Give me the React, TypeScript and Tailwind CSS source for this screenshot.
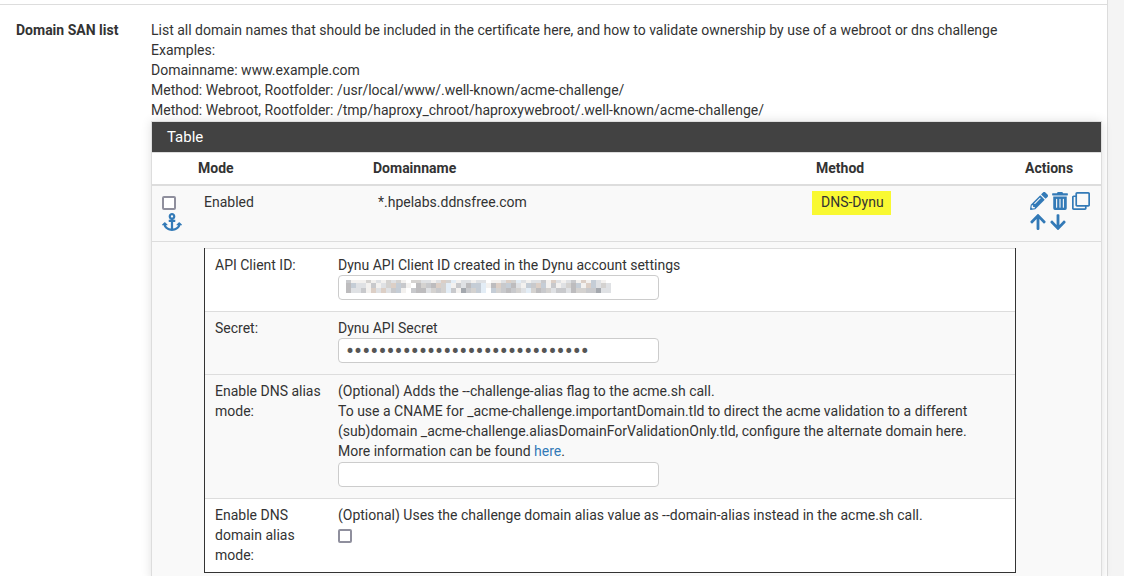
import React from "react";
import { FaAnchor, FaArrowDown, FaArrowUp, FaPencilAlt, FaRegClone, FaTrashAlt } from "react-icons/fa";

const maskColors: Record<string, string> = {
  a: "#a4a8ae",
  b: "#bdbcbe",
  c: "#c8c9cc",
  d: "#d4d2d0",
  e: "#dfe1e4",
  f: "#f3f1ef",
  w: "#ffffff",
  s: "#e3edf6",
  t: "#dccfc6",
  u: "#c5cdd6",
};

const maskRows = [
  { y: 0, height: 3, cells: "cfffdfefdedfwddeefetdsfeefeewffetdsefeecftefecftfuefw" },
  { y: 3, height: 5, cells: "bueefcfedtucfwbdcbtdsfcebuusfbtcubefuctufcfedbuftuede" },
  { y: 8, height: 5, cells: "beecftetecufwcbbedcdscfacduswudcbcdesdbcdeccebddccaee" },
];

const box = "block h-[25px] w-[321px] max-w-full rounded border border-[#cccccc] bg-white px-[7px] text-[#555555] outline-none";
const tick = "block size-[14px] appearance-none rounded-[2px] border-2 border-[#8f8f9d] bg-white checked:bg-[#337ab7]";
const labelCell = "w-[123px] pl-[10px] pr-[5px] pt-[6px] pb-[7px]";
const fieldCell = "px-[10px] pt-[6px] pb-[11px]";

function MaskedValue() {
  return (
    <svg className="pointer-events-none absolute top-[5px] left-2" width="265" height="13" viewBox="0 0 265 13" shapeRendering="crispEdges" aria-hidden="true">
      {maskRows.map((row) =>
        row.cells.split("").map((cell, i) => (
          <rect key={`${row.y}-${i}`} x={i * 5} y={row.y} width="5" height={row.height} fill={maskColors[cell]} />
        ))
      )}
    </svg>
  );
}

export default function App() {
  return (
    <div className="bg-[#f4f4f4] pr-4 font-[Roboto,sans-serif] text-sm leading-5 text-[#333333]">
      <main className="border-r border-[#dcdcdc] bg-white pt-1">
        <section className="flex border-t border-[#dddddd] pt-[15px] pr-[5px]">
          <h2 className="w-[151px] shrink-0 pl-4 font-bold">Domain SAN list</h2>
          <div className="min-w-0 flex-1">
            <p className="pb-px">
              List all domain names that should be included in the certificate here, and how to validate ownership by use of a webroot or dns challenge<br />
              Examples:<br />
              Domainname: www.example.com<br />
              Method: Webroot, Rootfolder: /usr/local/www/.well-known/acme-challenge/<br />
              Method: Webroot, Rootfolder: /tmp/haproxy_chroot/haproxywebroot/.well-known/acme-challenge/
            </p>
            <div className="border border-[#dddddd] bg-white shadow-[0_0_10px_rgba(0,0,0,0.12)]">
              <h3 className="bg-[#424242] px-[15px] py-[5px] text-[15px] text-white">Table</h3>
              <table className="w-full table-fixed border-collapse border-t border-[#dddddd] text-left align-top">
                <colgroup>
                  <col className="w-[41px]" />
                  <col className="w-[175px]" />
                  <col />
                  <col className="w-[209px]" />
                  <col className="w-[81px]" />
                </colgroup>
                <thead>
                  <tr className="border-b-2 border-[#dddddd]">
                    <td />
                    <th className="px-[5px] pt-[5px] pb-[6px]">Mode</th>
                    <th className="px-[5px] pt-[5px] pb-[6px]">Domainname</th>
                    <th className="px-[5px] pt-[5px] pb-[6px]">Method</th>
                    <th className="px-[5px] pt-[5px] pb-[6px]">Actions</th>
                  </tr>
                </thead>
                <tbody className="bg-[#f9f9f9]">
                  <tr className="border-b border-[#dddddd] align-top">
                    <td className="pt-[10px] pr-0 pb-[10px] pl-[10px]">
                      <input type="checkbox" aria-label="Select entry" className={tick} />
                      <button type="button" aria-label="Move checked entries here" className="mt-[3px] block text-[#337ab7]"><FaAnchor className="h-[18px] w-5" /></button>
                    </td>
                    <td className="px-[11px] py-[6px]">Enabled</td>
                    <td className="px-[10px] py-[6px]">*.hpelabs.ddnsfree.com</td>
                    <td className="px-[1px] py-[5px]">
                      <mark className="inline-block bg-[#f9f932] pt-px pr-[7px] pb-[3px] pl-[9px] text-[#333333]">DNS-Dynu</mark>
                    </td>
                    <td className="py-[6px] pl-[10px]">
                      <div className="flex flex-wrap gap-x-1 gap-y-[3px] text-[#337ab7]">
                        <button type="button" aria-label="Edit"><FaPencilAlt className="size-[18px]" /></button>
                        <button type="button" aria-label="Delete"><FaTrashAlt className="h-[18px] w-4" /></button>
                        <button type="button" aria-label="Duplicate"><FaRegClone className="size-[18px]" /></button>
                        <button type="button" aria-label="Move up"><FaArrowUp className="h-[18px] w-4" /></button>
                        <button type="button" aria-label="Move down"><FaArrowDown className="h-[18px] w-4" /></button>
                      </div>
                    </td>
                  </tr>
                  <tr>
                    <td />
                    <td colSpan={3} className="py-[6px] pr-1 pl-[11px]">
                      <table className="w-full border-separate border-spacing-0 border-x border-b border-[#333333] align-top [&_td]:border-t [&_td]:border-[#dddddd] [&_th]:border-t [&_th]:border-[#dddddd] [&_th]:text-left [&_th]:font-normal">
                        <tbody>
                          <tr className="bg-white align-top">
                            <th className={labelCell}><label htmlFor="client">API Client ID:</label></th>
                            <td className={fieldCell}>
                              <p>Dynu API Client ID created in the Dynu account settings</p>
                              <div className="relative">
                                <input id="client" type="text" className={`${box} text-sm`} />
                                <MaskedValue />
                              </div>
                            </td>
                          </tr>
                          <tr className="bg-[#f9f9f9] align-top">
                            <th className={labelCell}><label htmlFor="secret">Secret:</label></th>
                            <td className={fieldCell}>
                              <p>Dynu API Secret</p>
                              <input id="secret" type="password" defaultValue="000000000000000000000000000000" className={`${box} text-2xl`} />
                            </td>
                          </tr>
                          <tr className="bg-[#f9f9f9] align-top">
                            <th className={labelCell}><label htmlFor="alias">Enable DNS alias mode:</label></th>
                            <td className={fieldCell}>
                              <p className="pb-px">
                                (Optional) Adds the --challenge-alias flag to the acme.sh call.<br />
                                To use a CNAME for _acme-challenge.importantDomain.tld to direct the acme validation to a different (sub)domain _acme-challenge.aliasDomainForValidationOnly.tld, configure the alternate domain here.<br />
                                More information can be found <a href="#here" className="text-[#337ab7]">here</a>.
                              </p>
                              <input id="alias" type="text" className={`${box} text-sm`} />
                            </td>
                          </tr>
                          <tr className="bg-white align-top">
                            <th className={labelCell}><label htmlFor="domain-alias">Enable DNS domain alias mode:</label></th>
                            <td className={fieldCell}>
                              <p className="pb-1">(Optional) Uses the challenge domain alias value as --domain-alias instead in the acme.sh call.</p>
                              <input id="domain-alias" type="checkbox" className={tick} />
                            </td>
                          </tr>
                        </tbody>
                      </table>
                    </td>
                    <td />
                  </tr>
                </tbody>
              </table>
            </div>
          </div>
        </section>
      </main>
    </div>
  );
}
